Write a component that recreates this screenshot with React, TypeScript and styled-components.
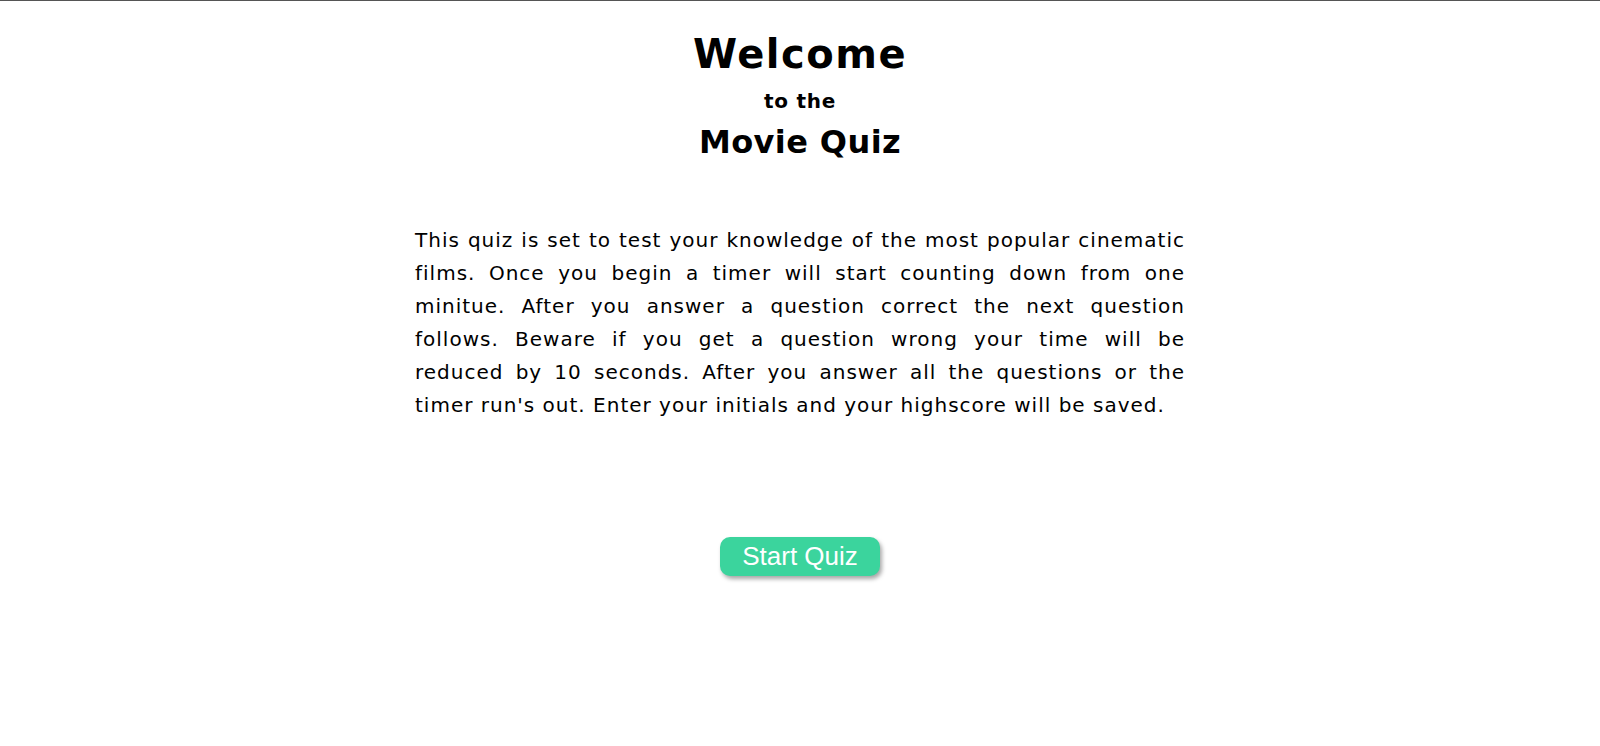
import styled, { createGlobalStyle } from "styled-components";

const GlobalStyle = createGlobalStyle`
  html, body {
    margin: 0;
    padding: 0;
    background: #ffffff;
  }
  body {
    font-family: "DejaVu Sans", Verdana, sans-serif;
    color: #000000;
  }
`;

const Page = styled.main({
  display: "flex",
  flexDirection: "column",
  alignItems: "center",
  minHeight: "100vh",
  boxSizing: "border-box",
  borderTop: "1px solid #555555",
  paddingTop: 29,
});

const Header = styled.header({
  display: "flex",
  flexDirection: "column",
  alignItems: "center",
  textAlign: "center",
});

const Title = styled.h1({
  margin: 0,
  fontSize: 40,
  lineHeight: "48px",
  fontWeight: 700,
  letterSpacing: 1.5,
});

const Subtitle = styled.h3({
  margin: "11px 0 0",
  fontSize: 20,
  lineHeight: "24px",
  fontWeight: 700,
  letterSpacing: 0.7,
});

const QuizName = styled.h2({
  margin: "10px 0 0",
  fontSize: 32,
  lineHeight: "38px",
  fontWeight: 700,
  letterSpacing: 0.4,
});

const Intro = styled.p({
  width: 770,
  margin: "63px 0 0",
  fontSize: 20,
  lineHeight: "33px",
  letterSpacing: 1,
});

const IntroLine = styled.span<{ $last?: boolean }>(({ $last }) => ({
  display: "block",
  whiteSpace: "nowrap",
  textAlign: $last ? "left" : "justify",
  textAlignLast: $last ? "left" : "justify",
}));

const StartButton = styled.button({
  marginTop: 115,
  padding: "4px 22px",
  border: "none",
  borderRadius: 10,
  backgroundColor: "#3bd49d",
  color: "#ffffff",
  fontFamily: '"Liberation Sans", Arial, sans-serif',
  fontSize: 26,
  lineHeight: "31px",
  boxShadow: "2px 3px 4px rgba(0, 0, 0, 0.35)",
  cursor: "pointer",
});

const introLines = [
  "This quiz is set to test your knowledge of the most popular cinematic",
  "films. Once you begin a timer will start counting down from one",
  "minitue. After you answer a question correct the next question",
  "follows. Beware if you get a question wrong your time will be",
  "reduced by 10 seconds. After you answer all the questions or the",
  "timer run's out. Enter your initials and your highscore will be saved.",
];

export default function App() {
  return (
    <>
      <GlobalStyle />
      <Page>
        <Header>
          <Title>Welcome</Title>
          <Subtitle>to the</Subtitle>
          <QuizName>Movie Quiz</QuizName>
        </Header>
        <Intro>
          {introLines.map((line, i) => (
            <IntroLine key={i} $last={i === introLines.length - 1}>
              {line}
            </IntroLine>
          ))}
        </Intro>
        <StartButton type="button">Start Quiz</StartButton>
      </Page>
    </>
  );
}
